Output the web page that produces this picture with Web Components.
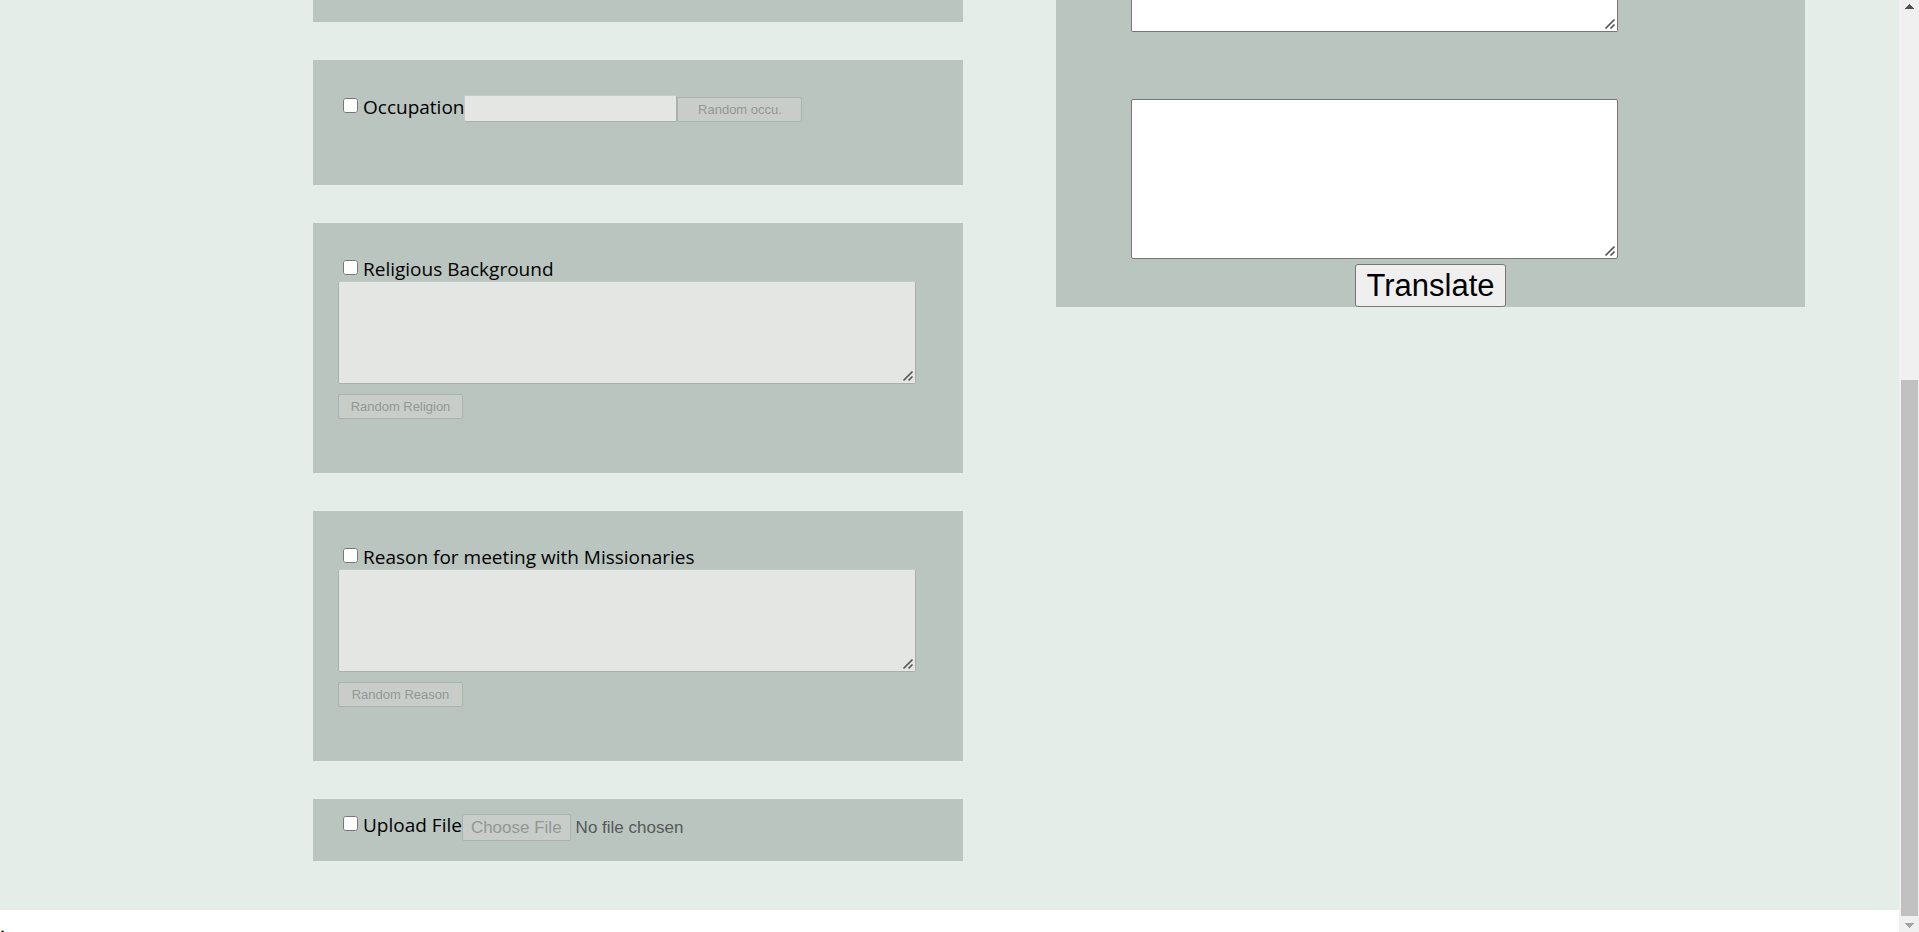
<!DOCTYPE html>
<html lang="en">
<head>
<meta charset="utf-8">
<title>Profile builder</title>
<style>
body { margin: 0; background: #fff; color: #000; font: 20px/24px "Open Sans", "Noto Sans", sans-serif; }
</style>
</head>
<body>
<profile-page>
  <field-card slot="fields" size="stub"></field-card>
  <field-card slot="fields" kind="line" size="short" label="Occupation" action="Random occu."></field-card>
  <field-card slot="fields" kind="area" label="Religious Background" action="Random Religion"></field-card>
  <field-card slot="fields" kind="area" label="Reason for meeting with Missionaries" action="Random Reason"></field-card>
  <field-card slot="fields" kind="file" size="file" label="Upload File"></field-card>
  <translate-panel slot="aside"></translate-panel>
  <span slot="footer">.</span>
</profile-page>

<script>
// Diagonal grip shared by every resizable text area.
const gripStyles = `
  textarea::-webkit-resizer {
    background: url("data:image/svg+xml,%3Csvg xmlns='http://www.w3.org/2000/svg' width='15' height='15'%3E%3Cpath d='M3.5 12.5l9-9M8.5 12.5l4-4' stroke='%23555' stroke-width='1.7' fill='none'/%3E%3C/svg%3E") right bottom no-repeat;
  }`;

class ProfilePage extends HTMLElement {
  constructor() {
    super();
    this.attachShadow({ mode: "open" }).innerHTML = `
      <style>
        :host { display: flex; height: 100vh; overflow: hidden; }
        .content { flex: 1; min-width: 0; }
        main {
          display: grid;
          grid-template-columns: 313fr 650fr 93fr 749fr 94fr;
          align-items: start;
          padding-bottom: 49px;
          background: #e4ede8;
        }
        .fields { grid-column: 2; display: flex; flex-direction: column; gap: 38px; }
        .aside { grid-column: 4; }
        footer { font: 20px/32px "Liberation Serif", serif; }
      </style>
      <div class="content">
        <main>
          <div class="fields"><slot name="fields"></slot></div>
          <div class="aside"><slot name="aside"></slot></div>
        </main>
        <footer><slot name="footer"></slot></footer>
      </div>
      <scroll-track></scroll-track>`;
  }
}

class ScrollTrack extends HTMLElement {
  constructor() {
    super();
    this.attachShadow({ mode: "open" }).innerHTML = `
      <style>
        :host { display: flex; flex-direction: column; width: 20px; background: #f0f0f0; }
        svg { display: block; flex: none; width: 20px; height: 16px; }
        .before { flex: 364; }
        .thumb { flex: 536; margin: 0 1px 0 2px; background: #c1c1c1; }
      </style>
      <svg viewBox="0 0 20 16" shape-rendering="crispEdges" aria-hidden="true"><path d="M10 4h1v1h1v1h1v1h1v1h1v1H6V8h1V7h1V6h1V5h1z" fill="#505050"/></svg>
      <div class="before"></div>
      <div class="thumb"></div>
      <svg viewBox="0 0 20 16" shape-rendering="crispEdges" aria-hidden="true"><path d="M6 7h9v1h-1v1h-1v1h-1v1h-1v1h-1v-1H9v-1H8V9H7V8H6z" fill="#a3a3a3"/></svg>`;
  }
}

class FieldCard extends HTMLElement {
  constructor() {
    super();
    const kind = this.getAttribute("kind");
    const label = this.getAttribute("label");
    const action = `<button type="button" disabled>${this.getAttribute("action")}</button>`;
    const check = `<label class="check"><input type="checkbox">${label}</label>`;
    const bodies = {
      line: `<div class="row">${check}<input class="line" type="text" aria-label="${label}" disabled>${action}</div>`,
      area: `<div class="row">${check}</div><textarea aria-label="${label}" disabled></textarea>${action}`,
      file: `<div class="row">${check}<input class="file" type="file" aria-label="${label}" disabled></div>`
    };
    this.attachShadow({ mode: "open" }).innerHTML = `
      <style>
        :host { display: block; box-sizing: border-box; min-height: 250px; padding: 34px 25px 0; background: #bbc5c0; }
        :host([size="stub"]) { min-height: 22px; padding: 0; }
        :host([size="short"]) { min-height: 125px; padding-top: 35px; }
        :host([size="file"]) { min-height: 62px; padding-top: 14px; }
        .row { display: flex; align-items: flex-end; }
        .check { display: flex; align-self: flex-start; white-space: nowrap; font-size: 19px; }
        input[type="checkbox"] { width: 15px; height: 15px; margin: 3px 5px 0; }
        .line, textarea, button { box-sizing: border-box; margin: 0; border-radius: 2px; }
        .line { width: 213px; height: 27px; border: 1px solid #a9b0ac; border-top-color: #c6cbc8; border-left-color: #c6cbc8; background: #e4e6e4; }
        textarea { display: block; width: 578px; max-width: 100%; height: 103px; border: 1px solid #a9b0ac; border-top-color: #c6cbc8; background: #e4e6e4; }
        button { width: 125px; height: 25px; padding: 0; border: 1px solid #abb3af; background: #c8cdca; color: #939795; font: 13px "Liberation Sans", Arial, sans-serif; }
        textarea + button { display: block; margin-top: 10px; }
        .file { height: 28px; margin: 0; padding-top: 1px; box-sizing: border-box; color: #555957; font: 17px "Liberation Sans", Arial, sans-serif; }
        .file::file-selector-button { box-sizing: border-box; height: 27px; margin: 0 5px 0 0; padding: 0 8px; border: 1px solid #abb3af; border-radius: 2px; background: #c8cdca; color: #939795; font: inherit; }
        ${gripStyles}
      </style>
      ${bodies[kind] || ""}`;
  }
}

class TranslatePanel extends HTMLElement {
  constructor() {
    super();
    this.attachShadow({ mode: "open" }).innerHTML = `
      <style>
        :host { display: flex; flex-direction: column; background: #bbc5c0; }
        textarea { box-sizing: border-box; width: 65%; height: 160px; margin: 0 0 0 10%; border: 1px solid #767676; border-radius: 2px; background: #fff; }
        .source { height: 32px; margin-bottom: 67px; border-top: 0; border-radius: 0 0 2px 2px; }
        button { box-sizing: border-box; align-self: center; height: 43px; margin-top: 5px; padding: 0 10px; border: 1px solid #767676; border-radius: 3px; background: #efefef; color: #000; font: 31px "Liberation Sans", Arial, sans-serif; }
        ${gripStyles}
      </style>
      <textarea class="source" aria-label="Source text"></textarea>
      <textarea aria-label="Translation"></textarea>
      <button type="button">Translate</button>`;
  }
}

customElements.define("scroll-track", ScrollTrack);
customElements.define("field-card", FieldCard);
customElements.define("translate-panel", TranslatePanel);
customElements.define("profile-page", ProfilePage);
</script>
</body>
</html>
